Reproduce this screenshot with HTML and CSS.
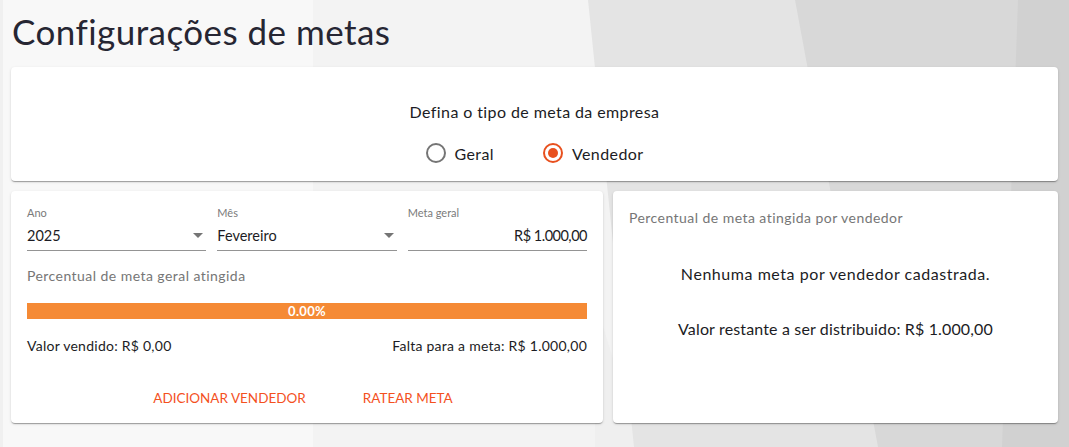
FILE: index.html
```html
<!DOCTYPE html>
<html lang="pt-BR">
<head>
<meta charset="utf-8">
<title>Configurações de metas</title>
<link rel="stylesheet" href="styles.css">
</head>
<body>
<div class="bg" aria-hidden="true">
  <svg width="1069" height="447" viewBox="0 0 1069 447" preserveAspectRatio="none">
    <rect x="0" y="0" width="1069" height="447" fill="#f8f8f8"/>
    <rect x="0" y="0" width="3" height="447" fill="#f0f0f0"/>
    <polygon points="313,0 1069,0 1069,447 313,447" fill="#f3f3f3"/>
    <polygon points="595,300 640,447 595,447" fill="#efefef"/>
    <polygon points="588,0 1069,0 1069,447 634,447" fill="#e4e4e4"/>
    <polygon points="795,0 1069,0 1069,447 878,447" fill="#d8d8d8"/>
    <polygon points="1018,0 1069,0 1069,447 1002,447" fill="#d1d1d1"/>
  </svg>
</div>
<main class="page">
  <h1 class="title">Configurações de metas</h1>

  <section class="card type-card">
    <p class="type-question">Defina o tipo de meta da empresa</p>
    <div class="radio-group">
      <label class="radio">
        <span class="radio-circle"></span>
        <span class="radio-label">Geral</span>
      </label>
      <label class="radio checked">
        <span class="radio-circle"><span class="radio-dot"></span></span>
        <span class="radio-label">Vendedor</span>
      </label>
    </div>
  </section>

  <div class="columns">
    <section class="card goal-card">
      <div class="fields">
        <div class="field">
          <span class="field-label">Ano</span>
          <div class="field-input">
            <span class="field-value">2025</span>
            <svg class="caret" width="10" height="5" viewBox="0 0 10 5"><polygon points="0,0 10,0 5,5" fill="#757575"/></svg>
          </div>
        </div>
        <div class="field">
          <span class="field-label">Mês</span>
          <div class="field-input">
            <span class="field-value">Fevereiro</span>
            <svg class="caret" width="10" height="5" viewBox="0 0 10 5"><polygon points="0,0 10,0 5,5" fill="#757575"/></svg>
          </div>
        </div>
        <div class="field">
          <span class="field-label">Meta geral</span>
          <div class="field-input right">
            <span class="field-value money">R$ 1.000,00</span>
          </div>
        </div>
      </div>

      <p class="muted section-label">Percentual de meta geral atingida</p>

      <div class="progress">
        <div class="progress-fill" style="width: 100%"></div>
        <span class="progress-text">0.00%</span>
      </div>

      <div class="totals">
        <span>Valor vendido: R$ 0,00</span>
        <span>Falta para a meta: R$ 1.000,00</span>
      </div>

      <div class="actions">
        <button class="btn-text">Adicionar vendedor</button>
        <button class="btn-text">Ratear meta</button>
      </div>
    </section>

    <section class="card seller-card">
      <p class="muted seller-heading">Percentual de meta atingida por vendedor</p>
      <p class="seller-empty">Nenhuma meta por vendedor cadastrada.</p>
      <p class="seller-rest">Valor restante a ser distribuido: R$ 1.000,00</p>
    </section>
  </div>
</main>
</body>
</html>
```

FILE: styles.css
```css
* { box-sizing: border-box; }

html, body {
  margin: 0;
  padding: 0;
  width: 1069px;
  height: 447px;
  overflow: hidden;
}

body {
  position: relative;
  font-family: "Lato", "Open Sans", sans-serif;
  color: #1c1c24;
  background: #f8f8f8;
}

.bg {
  position: absolute;
  inset: 0;
  z-index: 0;
}
.bg svg { display: block; }

.page {
  position: relative;
  z-index: 1;
  padding: 0 11px;
  display: flex;
  flex-direction: column;
}

.title {
  margin: 0;
  padding-top: 8px;
  height: 67px;
  font-size: 35px;
  line-height: 46px;
  font-weight: 400;
  color: #262633;
  padding-left: 1px;
  letter-spacing: 0.45px;
}

.card {
  background: #fff;
  border-radius: 4px;
  box-shadow: 0 2px 1px -1px rgba(0,0,0,0.2), 0 1px 1px 0 rgba(0,0,0,0.14), 0 1px 3px 0 rgba(0,0,0,0.12);
}

p { margin: 0; }

.type-card {
  height: 114px;
  padding-top: 33px;
  display: flex;
  flex-direction: column;
  align-items: center;
}

.type-question {
  font-size: 16px;
  line-height: 24px;
  letter-spacing: 0.4px;
  color: #1c1c24;
}

.radio-group {
  margin-top: 9px;
  height: 40px;
  display: flex;
  align-items: center;
  gap: 49px;
}

.radio {
  display: flex;
  align-items: center;
  gap: 9px;
  font-size: 16px;
  letter-spacing: 0.4px;
  cursor: pointer;
}

.radio-circle {
  width: 20px;
  height: 20px;
  border: 2px solid #757575;
  border-radius: 50%;
  display: flex;
  align-items: center;
  justify-content: center;
}

.radio.checked .radio-circle { border-color: #e8501e; }

.radio-dot {
  width: 10px;
  height: 10px;
  border-radius: 50%;
  background: #e8501e;
}

.columns {
  margin-top: 10px;
  display: flex;
  gap: 10px;
}

.goal-card {
  width: 592px;
  height: 232px;
  padding: 14px 16px 0 16px;
  display: flex;
  flex-direction: column;
}

.fields {
  display: grid;
  grid-template-columns: repeat(3, 1fr);
  column-gap: 11px;
}

.field {
  display: flex;
  flex-direction: column;
}

.field-label {
  font-size: 11px;
  line-height: 16px;
  color: #7a7a7a;
}

.field-input {
  height: 30px;
  border-bottom: 1px solid #949494;
  display: flex;
  align-items: center;
  justify-content: space-between;
  padding-bottom: 1px;
}
.field-input.right { justify-content: flex-end; }

.field-value {
  font-size: 14.5px;
  color: #1c1c24;
}
.field-value.money { letter-spacing: -0.5px; }

.caret { margin-right: 3px; }

.muted { color: #767676; }

.section-label {
  margin-top: 15px;
  font-size: 14px;
  line-height: 20px;
  letter-spacing: 0.45px;
}

.progress {
  position: relative;
  margin-top: 17px;
  height: 16px;
  background: #f8c9a3;
  display: flex;
  align-items: center;
  justify-content: center;
}

.progress-fill {
  position: absolute;
  left: 0;
  top: 0;
  bottom: 0;
  background: #f58a35;
}

.progress-text {
  position: relative;
  color: #fff;
  font-size: 13px;
  font-weight: 700;
  line-height: 16px;
  letter-spacing: 0.3px;
}

.totals {
  margin-top: 17px;
  display: flex;
  justify-content: space-between;
  font-size: 14px;
  line-height: 20px;
  letter-spacing: 0.25px;
}

.actions {
  margin-top: 24px;
  height: 36px;
  display: flex;
  justify-content: center;
  gap: 41px;
  padding-right: 8px;
}

.btn-text {
  background: none;
  border: 0;
  padding: 0 8px;
  font-family: inherit;
  font-size: 13.5px;
  text-transform: uppercase;
  color: #f4511e;
  letter-spacing: 0;
  cursor: pointer;
}

.seller-card {
  flex: 1;
  height: 232px;
  padding: 17px 16px 0 16px;
  display: flex;
  flex-direction: column;
}

.seller-heading {
  font-size: 14px;
  line-height: 20px;
  letter-spacing: 0.45px;
}

.seller-empty {
  margin-top: 34px;
  text-align: center;
  font-size: 16px;
  line-height: 24px;
  letter-spacing: 0.55px;
}

.seller-rest {
  margin-top: 31px;
  text-align: center;
  font-size: 16px;
  line-height: 24px;
  letter-spacing: 0.15px;
}
```
